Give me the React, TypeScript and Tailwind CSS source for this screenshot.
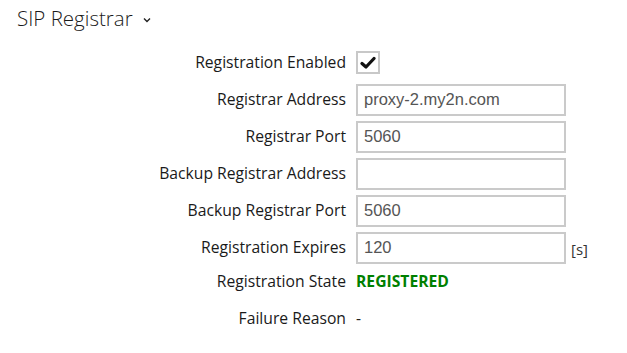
import React from "react";

const labelFont = { fontFamily: '"Segoe UI", "Open Sans", "Noto Sans", sans-serif' };

type Row =
  | { label: string; kind: "check" }
  | { label: string; kind: "input"; value: string; unit?: string }
  | { label: string; kind: "text"; value: string; className: string; h: string };

const rows: Row[] = [
  { label: "Registration Enabled", kind: "check" },
  { label: "Registrar Address", kind: "input", value: "proxy-2.my2n.com" },
  { label: "Registrar Port", kind: "input", value: "5060" },
  { label: "Backup Registrar Address", kind: "input", value: "" },
  { label: "Backup Registrar Port", kind: "input", value: "5060" },
  { label: "Registration Expires", kind: "input", value: "120", unit: "[s]" },
  {
    label: "Registration State",
    kind: "text",
    value: "REGISTERED",
    className: "font-bold text-[#008000]",
    h: "h-[31px]",
  },
  { label: "Failure Reason", kind: "text", value: "-", className: "text-[#222]", h: "h-[44px]" },
];

function Checkbox() {
  return (
    <div className="w-[24px] h-[23px] border-2 border-[#c8c8c8] bg-white flex items-center justify-center">
      <svg width="16" height="14" viewBox="0 0 16 14">
        <path d="M2 7.5 L6 11 L14 2.5" fill="none" stroke="#111" strokeWidth="3.2" strokeLinecap="round" strokeLinejoin="round" />
      </svg>
    </div>
  );
}

export default function App() {
  return (
    <div className="w-[627px] h-[353px] bg-white overflow-hidden text-[#1a1a1a]" style={labelFont}>
      <div className="h-[44px] pl-[17px] pt-[4px] flex items-start">
        <span className="text-[20.5px] leading-[28px] font-light">SIP Registrar</span>
        <svg className="ml-[10px] mt-[13px]" width="8" height="6" viewBox="0 0 8 6">
          <path d="M1 1.5 L4 4.5 L7 1.5" fill="none" stroke="#222" strokeWidth="1.4" />
        </svg>
      </div>
      <div className="flex flex-col">
        {rows.map((row) => (
          <div
            key={row.label}
            className={`flex items-center ${row.kind === "text" ? row.h : "h-[37px]"}`}
          >
            <div className="w-[346px] text-right text-[15.7px]">{row.label}</div>
            <div className="ml-[10px] flex items-center">
              {row.kind === "check" && <Checkbox />}
              {row.kind === "input" && (
                <>
                  <input
                    readOnly
                    value={row.value}
                    className="w-[210px] h-[32px] border-2 border-[#cacaca] px-[6px] text-[16.5px] text-[#555] outline-none"
                    style={{ fontFamily: '"Liberation Sans", Arial, sans-serif' }}
                  />
                  {row.unit && <span className="ml-[5px] mt-[4px] text-[15px] text-[#333]">{row.unit}</span>}
                </>
              )}
              {row.kind === "text" && (
                <span className={`text-[15.7px] ${row.className}`}>{row.value}</span>
              )}
            </div>
          </div>
        ))}
      </div>
    </div>
  );
}
